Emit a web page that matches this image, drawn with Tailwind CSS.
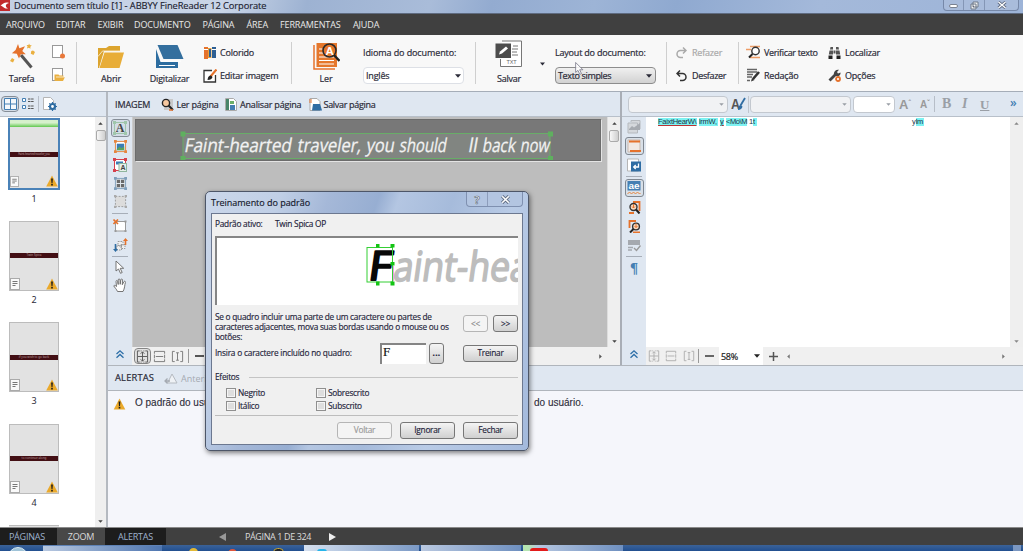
<!DOCTYPE html>
<html lang="pt-BR">
<head>
<meta charset="utf-8">
<title>Documento sem título [1] - ABBYY FineReader 12 Corporate</title>
<script src="https://cdn.jsdelivr.net/npm/@tailwindcss/browser@4"></script>
</head>
<body class="relative w-[1023px] h-[551px] overflow-hidden flex flex-col bg-[#f7f7f7] font-['Open_Sans','Noto_Sans',sans-serif] text-[9px] leading-none text-[#2b2b38] whitespace-nowrap">

<!-- shared symbols -->
<svg class="hidden">
  <symbol id="warn" viewBox="0 0 12 12"><path d="M6 .5 11.8 11.5H.2Z" fill="#eaa92b"/><path d="M5.1 3.5h1.8L6.5 8h-1ZM5.2 8.8h1.6v1.7H5.2Z" fill="#1b1b1b"/></symbol>
  <symbol id="note" viewBox="0 0 10 12"><rect x=".5" y=".5" width="9" height="11" fill="#fafafa" stroke="#aaa"/><path d="M2.5 3.5h5M2.5 5.5h5M2.5 7.5h3" stroke="#777"/></symbol>
  <symbol id="fit" viewBox="0 0 14 14"><path d="M4 1H1.500v12H4M10 1h2.500v12H10M7 2v10M2 7h10M5 4l2-2 2 2M5 10l2 2 2-2" fill="none" stroke="currentColor"/><path d="M5 1h1M8 1h1M5 13h1M8 13h1" stroke="currentColor"/></symbol>
  <symbol id="fitw" viewBox="0 0 14 14"><path d="M1.500 4V1.500h11V4M1.500 10v2.500h11V10M1.500 5v4M12.500 5v4M3 7h8" fill="none" stroke="currentColor"/></symbol>
  <symbol id="fith" viewBox="0 0 14 14"><path d="M4 1.500H1.500v11H4M10 1.500h2.500v11H10M7 3v8M5.500 3h3M5.500 11h3" fill="none" stroke="currentColor"/></symbol>
  <symbol id="chev" viewBox="0 0 10 10"><path d="M1.500 5 5 1.800 8.500 5M1.500 8.700 5 5.500l3.500 3.200" fill="none" stroke="#2d6fa8" stroke-width="1.300"/></symbol>
  <symbol id="dd" viewBox="0 0 6 4"><path d="M0 .3h6L3 3.800Z" fill="currentColor"/></symbol>
  <symbol id="frame" viewBox="0 0 14 14"><rect x="1.500" y="1.500" width="11" height="11" fill="none" stroke="currentColor"/><path d="M0 0h3v3H0ZM11 0h3v3h-3ZM0 11h3v3H0ZM11 11h3v3h-3Z" fill="currentColor"/></symbol>
</svg>

<!-- title bar -->
<header class="h-[14px] shrink-0 flex items-start border-b border-[#5f6b80] bg-[linear-gradient(105deg,#c3d0e4_0%,#c9d5e7_22%,#9db2d2_30%,#a9bcd9_42%,#93abd0_48%,#9db4d6_58%,#8fa9d0_66%,#a4b9da_80%,#9db4d8_100%)]">
  <svg class="w-[10px] h-[11px]" viewBox="0 0 10 11"><rect width="10" height="11" fill="#c22a2c"/><path d="M9 3C5 1.500 3 4 .5 5.500 3 6 4 9 8 8.500 5 7 5 4 9 3Z" fill="#fff"/></svg>
  <span class="ml-1 mt-px text-[9.300px] tracking-[-0.090px] text-[#1c2230] [-webkit-text-stroke:.15px]">Documento sem título [1] - ABBYY FineReader 12 Corporate</span>
  <div class="ml-auto mr-[4px] w-[76px] h-[11px] flex rounded-b border border-t-0 border-[#7688a8] bg-[#a9bcdb]">
    <span class="w-[20px] border-r border-[#8496b5] grid place-items-center"><i class="mt-0.5 w-[9px] h-[4px] rounded-sm border border-[#7a8291] bg-white"></i></span>
    <span class="w-[21px] border-r border-[#8496b5] grid place-items-center"><svg class="w-[9px] h-[9px]" viewBox="0 0 9 9"><path d="M3 1h5v5H3ZM1 3h5v5H1Z" fill="#f3f3f3" stroke="#6f7888"/><path d="M3 5h1v1H3Z" fill="#667"/></svg></span>
    <span class="flex-1 grid place-items-center"><svg class="w-[10px] h-[8px]" viewBox="0 0 10 8"><path d="m1.500 1 7 6M8.500 1l-7 6" stroke="#5e6a80" stroke-width="3"/><path d="m1.500 1 7 6M8.500 1l-7 6" stroke="#fff" stroke-width="1.300"/></svg></span>
  </div>
</header>

<!-- menu -->
<nav class="h-[21px] shrink-0 flex items-center pl-[6px] gap-[11.500px] bg-[#404040] text-[#e9e9e9] text-[9px] tracking-[-0.120px]">
  <span class="w-[38.500px]">ARQUIVO</span><span class="w-[30px]">EDITAR</span><span class="w-[25px]">EXIBIR</span><span class="w-[57px]">DOCUMENTO</span><span class="w-[32.500px]">PÁGINA</span><span class="w-[22px]">ÁREA</span><span class="w-[61.500px]">FERRAMENTAS</span><span>AJUDA</span>
</nav>

<!-- toolbar -->
<section class="h-[56px] shrink-0 flex items-center bg-[#f8f8f8] tracking-[-0.200px] [-webkit-text-stroke:.2px]">
  <div class="w-[77px] h-[42px] border-r border-[#cfcfcf] flex">
    <div class="w-[43px] flex flex-col items-center">
      <svg class="w-[26px] h-[27px] mt-px" viewBox="8 45 26 27"><path d="m20 57 10.500 12.500" stroke="#555" stroke-width="3"/><path d="m17 46 1.400 4.200 5.600-2-2.700 4.700 3.500 3.400-5-.1-1.800 4.300-2.200-4.700-4.900-.6 3.700-3.200Z" fill="#e5722c"/><path d="m28 45.500.8 1.600 2 .5-1.500 1.200.2 2-1.700-1-1.900.6.700-1.800-1-1.600h1.900ZM32 52.500l2 1.500-1.500 3-2.700-1.200.5-2.700ZM11 60l2.500 1.500-1.500 3-3-1.500Z" fill="#eab040"/></svg>
      <span class="mt-[4px]">Tarefa</span>
    </div>
    <div class="pl-[8px] pt-[3px] flex flex-col gap-[9px]">
      <svg class="w-[15px] h-[14px]" viewBox="0 0 15 14"><rect x="1.500" y=".5" width="10" height="12" fill="#fff" stroke="#999"/><circle cx="11.500" cy="11" r="2.500" fill="#e9783a"/></svg>
      <svg class="w-[15px] h-[14px]" viewBox="0 0 15 14"><rect x="1.500" y=".5" width="10" height="12" fill="#fff" stroke="#999"/><path d="M3.500 13V6.500h4l1 1h4V9h1.500l-2 4Z" fill="#eab040"/><path d="m5 9 9 0" stroke="#fff" stroke-width=".7"/></svg>
    </div>
  </div>
  <div class="w-[215px] h-[42px] border-r border-[#cfcfcf] flex">
    <div class="w-[68px] flex flex-col items-center">
      <svg class="w-[28px] h-[26px] mt-[2px]" viewBox="97 45 28 26"><path d="M98 69V49h8l3-2h11v5H104l-5 17Z" fill="#dca42e"/><path d="M104.500 53.500H124L119.500 69H99.500Z" fill="#e8ad38"/><path d="M98 57.500 102.500 52H121" fill="none" stroke="#fbf3df" stroke-width=".8"/></svg>
      <span class="mt-[4px]">Abrir</span>
    </div>
    <div class="w-[49px] flex flex-col items-center">
      <svg class="w-[28px] h-[26px] mt-[2px]" viewBox="156 45 28 26"><path d="M156 50v19h22v-6h-17.500Z" fill="#2d6da0"/><path d="M157.500 46h20L183.500 60h-20Z" fill="#346f9e"/><path d="M161 62h20M159 66.500h16" stroke="#fff" stroke-width="1"/></svg>
      <span class="mt-[4px]">Digitalizar</span>
    </div>
    <div class="pl-[9px] flex flex-col">
      <div class="h-[19px] shrink-0 mt-px flex items-center gap-[4px]"><svg class="w-[13px] h-[13px]" viewBox="0 0 13 13"><path d="M1 1h4v12H1Z" fill="#e5722c"/><path d="M5 2h3.500v10H5Z" fill="#e9a23a"/><path d="M9 1h4v11H9ZM6 3h2v8H6Z" fill="#2d5f93"/><path d="M1 3.500h4M9 3.500h4" stroke="#fff"/></svg><span>Colorido</span></div>
      <div class="h-[27px] shrink-0 flex items-center gap-[3px]"><svg class="w-[14px] h-[14px]" viewBox="0 0 14 14"><path d="M9 1.500H1v11.500h11.500V6" fill="#fff" stroke="#333" stroke-width="1.300"/><path d="m13.500.5-6 7" stroke="#e5722c" stroke-width="2.200"/><path d="M8 6.500c-2 0-3 1-3.500 4.500 3 0 4.500-1 5-3Z" fill="#222"/></svg><span>Editar imagem</span></div>
    </div>
  </div>
  <div class="w-[184px] h-[42px] border-r border-[#cfcfcf] flex">
    <div class="w-[68px] flex flex-col items-center">
      <svg class="w-[28px] h-[28px]" viewBox="311 43 28 28"><path d="M313 46v24h21" fill="none" stroke="#e5722c" stroke-width="1.500"/><path d="M315.500 44H336v24h-20.500Z" fill="#e5772c"/><path d="M318 50h6M318 54h6M318 58h15M318 61.500h15M318 65h15" stroke="#fff"/><circle cx="328.500" cy="51.500" r="6.500" fill="#e5772c" stroke="#2a2a2a" stroke-width="1.600"/><path d="m333 56 5.500 6" stroke="#222" stroke-width="2.400"/><text x="324.500" y="56" font-family="Liberation Sans" font-weight="bold" font-size="11.500" fill="#fff">A</text></svg>
      <span class="mt-[4px]">Ler</span>
    </div>
    <div class="pl-[3px] flex flex-col">
      <span class="h-[19px] mt-px flex items-center tracking-[-0.100px]">Idioma do documento:</span>
      <div class="mt-[5px] w-[101px] h-[17px] border border-[#dde0e6] rounded-sm bg-white flex items-center justify-between px-[2px]"><span>Inglês</span><svg class="w-[6px] h-[4px]"><use href="#dd"/></svg></div>
    </div>
  </div>
  <div class="w-[191px] h-[42px] border-r border-[#cfcfcf] flex">
    <div class="w-[64px] pl-[2px] flex flex-col items-center">
      <svg class="w-[28px] h-[28px] -mt-[2px]" viewBox="495 41 28 28"><path d="M502 42h19.500v25.500h-21V60" fill="#fff" stroke="#777"/><path d="M495.500 44.500H511V59h-15.500Z" fill="#4d4d4d"/><path d="m499 55.500 1-3 6-5 2 2-6 5Z" fill="#fff"/><path d="M513 47h5M512 50h6M512 53h5M512 56h6" stroke="#777"/><text x="506.500" y="65" font-family="Liberation Sans" font-size="5.500" fill="#666">TXT</text></svg>
      <span class="mt-[6px]">Salvar</span>
    </div>
    <svg class="w-[5px] h-[4px] mt-[20px]"><use href="#dd"/></svg>
    <div class="pl-[10px] flex flex-col">
      <span class="h-[19px] mt-px flex items-center">Layout do documento:</span>
      <div class="mt-[5px] w-[101px] h-[17px] border border-[#8d8d8d] rounded-sm bg-linear-to-b from-[#f0f0f0] to-[#d2d2d2] flex items-center justify-between px-[2px]"><span class="tracking-[-0.350px]">Texto simples</span><svg class="w-[6px] h-[4px] mr-px"><use href="#dd"/></svg></div>
    </div>
  </div>
  <div class="w-[72px] h-[42px] border-r border-[#cfcfcf] pl-[9px]">
    <div class="h-[19px] mt-px flex items-center gap-[5px] text-[#a9a9a9]"><svg class="w-[11px] h-[13px]" viewBox="0 0 11 13"><path d="M7 1.500 10 4.500 7 7.500M10 4.500H4.500a3 3 0 0 0 0 7H7" fill="none" stroke="#aaa" stroke-width="1.500"/></svg><span>Refazer</span></div>
    <div class="h-[27px] flex items-center gap-[5px] tracking-[-0.350px]"><svg class="w-[11px] h-[13px]" viewBox="0 0 11 13"><path d="M4 1.500 1 4.500l3 3M1 4.500h5.500a3 3 0 0 1 0 7H4" fill="none" stroke="#333" stroke-width="1.500"/></svg><span>Desfazer</span></div>
  </div>
  <div class="pl-[7px] h-[42px] grid grid-cols-[82px_auto] grid-rows-[20px_26px]">
    <div class="flex items-center gap-[3px]"><svg class="w-[15px] h-[14px]" viewBox="0 0 15 14"><path d="M4 1.500h10M0 4.500h5M4 12.500h10" stroke="#ee9d66" stroke-width="1.300"/><circle cx="9.500" cy="6" r="3.700" fill="#fff" stroke="#333" stroke-width="1.400"/><path d="M6.500 9 3 12.500" stroke="#222" stroke-width="2"/></svg><span class="tracking-[-0.330px]">Verificar texto</span></div>
    <div class="flex items-center gap-[4px]"><svg class="w-[13px] h-[13px]" viewBox="0 0 13 13"><path d="M2.500 1h2.500v2.500H2ZM8 1h2.500L11 3.500H8ZM1.500 4.500H5v4H.8ZM8 4.500h3.500l.7 4H8ZM5.500 4.500h2v3h-2Z" fill="#555"/><path d="M.5 9.500h4V13h-4ZM8.500 9.500h4V13h-4Z" fill="#222"/></svg><span>Localizar</span></div>
    <div class="flex items-center gap-[3px]"><svg class="w-[15px] h-[14px]" viewBox="0 0 15 14"><path d="M1 1.500h10M1 4h10M1 6.500h6M1 9h5M1 12.500h3" stroke="#666" stroke-width="1.300"/><path d="m13 4-6 7" stroke="#333" stroke-width="2.600"/><path d="M5 13.500 6 10l2.500 2Z" fill="#333"/></svg><span>Redação</span></div>
    <div class="flex items-center gap-[4px]"><svg class="w-[13px] h-[13px]" viewBox="0 0 13 13"><path d="m1.500 11.500 6-6" stroke="#444" stroke-width="2.800"/><path d="M11 .8 9 3l1 1.500 2.500-1C13 6 10.500 8 8 7L5.800 5C5.800 2.500 8 .2 11 .8Z" fill="#444"/><circle cx="10" cy="10" r="2" fill="#fff" stroke="#e5722c" stroke-width="1.800"/></svg><span>Opções</span></div>
  </div>
</section>

<!-- work area -->
<main class="h-[436px] shrink-0 flex border-t border-[#a5adb8]">
  <!-- pages -->
  <aside class="w-[108px] shrink-0 flex flex-col border-r-2 border-[#b4b9c0]">
    <div class="h-[24px] shrink-0 flex items-center bg-[#dfe7f1]">
      <span class="w-[18px] h-[16px] ml-px border-[1.500px] border-[#858d97] rounded-sm grid place-items-center bg-[#d5dde7]"><svg class="w-[13px] h-[12px]" viewBox="0 0 13 12"><path d="M.5.500h12v11H.5ZM6.500.500v11M.5 6h12" fill="#f4f8fc" stroke="#447fb3"/></svg></span>
      <svg class="w-[13px] h-[12px] ml-[3px]" viewBox="0 0 13 12"><path d="M.5.500h3v3h-3ZM.5 7.500h3v3h-3Z" fill="#fff" stroke="#447fb3"/><path d="M6 1h6M6 3.500h6M6 8h6M6 10.500h6" stroke="#555" stroke-dasharray="2.500 .6"/></svg>
      <i class="w-px h-[16px] bg-[#b7bec8] ml-[3px]"></i>
      <svg class="w-[14px] h-[14px] ml-[4px]" viewBox="0 0 14 14"><path d="M.5.500h7l3 3v9H.5Z" fill="#fff" stroke="#b5b5b5"/><circle cx="9.500" cy="9.500" r="2.500" fill="#fff" stroke="#2f6da3" stroke-width="2.200"/><path d="M9.500 5v2M9.500 12v2M5 9.500h2M12 9.500h2M6.300 6.300l1.400 1.400M11.300 11.300l1.400 1.400M12.700 6.300l-1.400 1.400M7.700 11.300l-1.400 1.400" stroke="#2f6da3" stroke-width="1.200"/></svg>
    </div>
    <div class="flex-1 min-h-0 flex border-t border-[#b8c0ca]">
      <div class="w-[95px] bg-white flex flex-col overflow-hidden pl-[8px] pt-[1px] font-['Noto_Sans',sans-serif] text-[9px]">
        <div class="h-[101.600px] shrink-0 w-[52px] flex flex-col">
          <div class="h-[71.500px] border-2 border-[#4a82b8] bg-[#e2e2e2] flex flex-col">
            <div class="h-[7px] bg-linear-to-b from-[#d6f0cc] from-40% to-[#5fc84c]"></div>
            <div class="mt-[25px] h-[5px] shrink-0 bg-[#430f14] text-[#b79a9c] text-[3px] tracking-[-0.200px] leading-[5px] text-center overflow-hidden">Faint-hearted traveler, you</div>
            <div class="flex-1 flex items-end justify-between pb-px"><svg class="w-[9px] h-[11px]"><use href="#note"/></svg><svg class="w-[12px] h-[12px]"><use href="#warn"/></svg></div>
          </div><span class="mt-[4px] text-center">1</span>
        </div>
        <div class="h-[101.600px] shrink-0 w-[52px] flex flex-col px-px pt-px">
          <div class="h-[70px] border border-[#bcbcbc] bg-[#e2e2e2] flex flex-col">
            <div class="mt-[31.500px] h-[5px] shrink-0 bg-[#430f14] text-[#b79a9c] text-[3px] leading-[5px] text-center">Twin Spica</div>
            <div class="flex-1 flex items-end justify-between"><svg class="w-[10px] h-[12px]"><use href="#note"/></svg><svg class="w-[12px] h-[12px]"><use href="#warn"/></svg></div>
          </div><span class="mt-[4px] text-center">2</span>
        </div>
        <div class="h-[101.600px] shrink-0 w-[52px] flex flex-col px-px pt-px">
          <div class="h-[70px] border border-[#bcbcbc] bg-[#e2e2e2] flex flex-col">
            <div class="mt-[31.500px] h-[5px] shrink-0 bg-[#430f14] text-[#b79a9c] text-[3px] leading-[5px] text-center">if you wish to go back</div>
            <div class="flex-1 flex items-end justify-between"><svg class="w-[10px] h-[12px]"><use href="#note"/></svg><svg class="w-[12px] h-[12px]"><use href="#warn"/></svg></div>
          </div><span class="mt-[4px] text-center">3</span>
        </div>
        <div class="h-[101.600px] shrink-0 w-[52px] flex flex-col px-px pt-px">
          <div class="h-[70px] border border-[#bcbcbc] bg-[#e2e2e2] flex flex-col">
            <div class="mt-[31.500px] h-[5px] shrink-0 bg-[#430f14] text-[#b79a9c] text-[3px] leading-[5px] text-center">to continue along</div>
            <div class="flex-1 flex items-end justify-between"><svg class="w-[10px] h-[12px]"><use href="#note"/></svg><svg class="w-[12px] h-[12px]"><use href="#warn"/></svg></div>
          </div><span class="mt-[4px] text-center">4</span>
        </div>
        <div class="w-[50px] ml-px mt-px h-2 shrink-0 border-t border-[#bcbcbc] bg-[#e2e2e2]"></div>
      </div>
      <div class="flex-1 bg-[#efefef] flex flex-col items-center pt-[5px] pb-[4px]">
        <svg class="w-[5px] h-[3px] rotate-180 text-[#444]"><use href="#dd"/></svg>
        <i class="mt-[5px] w-[10px] h-[11px] border border-[#aaa] rounded-[2px] bg-linear-to-r from-[#f8f8f8] to-[#cfcfcf]"></i>
        <svg class="mt-auto w-[5px] h-[3px] text-[#444]"><use href="#dd"/></svg>
      </div>
    </div>
  </aside>

  <div class="flex-1 min-w-0 flex flex-col">
    <div class="h-[274px] shrink-0 flex border-b border-[#b0b5bc]">
      <!-- image panel -->
      <section class="w-[514px] shrink-0 flex flex-col border-r-2 border-[#a9aeb6]">
        <div class="h-[24px] shrink-0 flex items-center pl-[7px] bg-[#dfe7f1] tracking-[-0.190px] [-webkit-text-stroke:.2px]">
          <span class="w-[46px] text-[9px] tracking-[-0.100px]">IMAGEM</span>
          <svg class="w-[13px] h-[13px]" viewBox="0 0 13 13"><path d="M3 1h9v11H3Z" fill="#c9c9c9"/><circle cx="5" cy="5" r="3.600" fill="#f6c79e" stroke="#222" stroke-width="1.400"/><path d="m7.500 7.500 4.500 4.500" stroke="#222" stroke-width="2"/><path d="M8 12h4" stroke="#e5722c" stroke-width="1.500"/></svg>
          <span class="ml-[2.500px] w-[48px]">Ler página</span>
          <svg class="w-[12px] h-[13px]" viewBox="0 0 12 13"><path d="M.5.500h8l3 3v9H.5Z" fill="#fff" stroke="#aaa"/><path d="M1 1h3v11H1Z" fill="#49856a"/><path d="M5 3h4v3H5Z" fill="#6cb06a"/><path d="M5 7h5v5H5Z" fill="#447fb3"/></svg>
          <span class="ml-[3.500px] w-[68.500px]">Analisar página</span>
          <svg class="w-[13px] h-[13px]" viewBox="0 0 13 13"><path d="M1 .5h7l3 3v9H1Z" fill="#fff" stroke="#aaa"/><path d="M0 2h3M0 4h3" stroke="#e5722c"/><path d="M4 6h7l2 6.500H3Z" fill="#2f6da3"/></svg>
          <span class="ml-[2px] tracking-[-0.300px]">Salvar página</span>
        </div>
        <div class="flex-1 min-h-0 flex border-t border-[#b8c0ca]">
          <div class="w-[24px] shrink-0 flex flex-col items-center pt-[1.500px] bg-[#dfe7f1]">
            <span class="w-[19px] h-[18.500px] shrink-0 border-[1.500px] border-[#858d97] rounded-[3px] bg-[#d3dce6] grid place-items-center"><svg class="w-[14px] h-[14px] text-[#9fc6ab]" viewBox="0 0 14 14"><use href="#frame"/><text x="2.700" y="11.300" font-family="Liberation Serif" font-weight="bold" font-size="12" fill="#444">A</text></svg></span>
            <span class="h-[18.500px] shrink-0 grid place-items-center"><svg class="w-[13px] h-[13px] text-[#e5853f]" viewBox="0 0 14 14"><path d="M2 2h10v10H2Z" fill="#fff"/><use href="#frame"/><path d="M3 4h8v7H3Z" fill="#3b7db5"/><path d="m3 10 3-3 2 2 3-2v4H3Z" fill="#5aa35c"/></svg></span>
            <span class="h-[18.500px] shrink-0 grid place-items-center"><svg class="w-[14px] h-[14px] text-[#d6404c]" viewBox="0 0 14 14"><path d="M2 2h10v10H2Z" fill="#fff"/><use href="#frame"/><path d="M3 3.500h7v3H3Z" fill="#3b7db5"/><rect x="6" y="5.500" width="7.500" height="8" fill="#e6f0ea" stroke="#8fb59e"/><text x="7.400" y="12.200" font-family="Liberation Sans" font-weight="bold" font-size="7" fill="#444">A</text></svg></span>
            <span class="h-[18.500px] shrink-0 grid place-items-center"><svg class="w-[13px] h-[13px] text-[#7f9fbb]" viewBox="0 0 14 14"><path d="M2 2h10v10H2Z" fill="#dfe6ec"/><use href="#frame"/><path d="M3 3h3.500v3.500H3ZM7.500 3H11v3.500H7.500ZM3 7.500h3.500V11H3ZM7.500 7.500H11V11H7.500Z" fill="#6a6a6a"/></svg></span>
            <span class="h-[18.500px] shrink-0 grid place-items-center"><svg class="w-[13px] h-[13px]" viewBox="0 0 14 14"><rect x="1.500" y="1.500" width="11" height="11" fill="#dcdcdc" stroke="#999" stroke-dasharray="2 1.500"/><path d="M0 0h2.500v2.500H0ZM11.500 0H14v2.500h-2.500ZM0 11.500h2.500V14H0ZM11.500 11.500H14V14h-2.500Z" fill="#aaa"/></svg></span>
            <i class="w-[16px] h-px my-[1.750px] shrink-0 bg-[#a7aeb8]"></i>
            <span class="h-[20px] shrink-0 grid place-items-center"><svg class="w-[14px] h-[13px]" viewBox="0 0 14 13"><rect x="2.500" y="2.500" width="10" height="9.500" fill="#fff" stroke="#999"/><path d="M11.500 1.500h2v2h-2ZM11.500 11h2v2h-2ZM1.500 11h2v2h-2Z" fill="#999"/><path d="m.5.500 4.500 4.500M5 .5.500 5" stroke="#e5722c" stroke-width="1.600"/></svg></span>
            <span class="h-[18.500px] shrink-0 grid place-items-center"><svg class="w-[15px] h-[14px]" viewBox="0 0 15 14"><path d="M5 3.500h5v4H5ZM3.500 8h5v4h-5ZM8 6.500h4v4H8Z" fill="#eee" stroke="#999" stroke-dasharray="1.500 1"/><path d="M12.500 0 15 3h-1.700v4h-1.600V3H10Z" fill="#e5722c"/><path d="M2.500 14 0 11h1.700V6h1.600v5H5Z" fill="#2f6da3"/></svg></span>
            <i class="w-[16px] h-px my-[1.500px] shrink-0 bg-[#a7aeb8]"></i>
            <span class="h-[18.500px] shrink-0 grid place-items-center"><svg class="w-[10px] h-[14px]" viewBox="0 0 10 14"><path d="M1 1v10l2.500-2 2 4.300 1.700-.8-2-4.200H8.700Z" fill="#fff" stroke="#666" stroke-width=".9"/></svg></span>
            <span class="h-[18.500px] shrink-0 grid place-items-center"><svg class="w-[15px] h-[15px]" viewBox="0 0 15 15"><path d="M4.500 13.500C3.500 11 1.500 9.500.8 7.800c.7-.8 1.700-.4 2.700.7L3 3.500c0-1.300 1.500-1.300 1.700 0l.5 3V2c0-1.400 1.700-1.400 1.800 0l.2 4.300.6-4.500c.3-1.200 1.800-1 1.700.3L9.300 6.700l1.600-3c.6-1 1.900-.4 1.500.8-.8 2.500-.6 6-2.400 9Z" fill="#fff" stroke="#666" stroke-width=".9"/></svg></span>
            <svg class="mt-auto mb-[6px] w-[10px] h-[10px] shrink-0"><use href="#chev"/></svg>
          </div>
          <div class="flex-1 min-w-0 flex flex-col">
            <div class="h-[230px] flex">
              <div class="w-[475px] bg-[#bdbdbd] pt-[2px] pl-[2px] border-l border-[#ccc]">
                <div class="w-[466px] h-[42px] bg-[#787878] border border-[#6c6c6c] shadow-[1px_1px_0_#e4e4e4]">
                  <svg class="block w-[464px] h-[40px]" viewBox="136 119 464 40"><rect x="183" y="132.500" width="367" height="25" fill="#818581" stroke="#68ad68"/><g transform="translate(26.500 0) skewX(-10)" font-family="'Open Sans',sans-serif" font-size="19" fill="#f2f2f2" stroke="#f2f2f2" stroke-width=".3"><text x="184" y="151" textLength="107" lengthAdjust="spacingAndGlyphs">Faint-hearted</text><text x="297" y="151" textLength="64" lengthAdjust="spacingAndGlyphs">traveler,</text><text x="366" y="151" textLength="28" lengthAdjust="spacingAndGlyphs">you</text><text x="399" y="151" textLength="47" lengthAdjust="spacingAndGlyphs">should</text><text x="468" y="151" textLength="9" lengthAdjust="spacingAndGlyphs">ll</text><text x="482" y="151" textLength="33" lengthAdjust="spacingAndGlyphs">back</text><text x="520" y="151" textLength="29" lengthAdjust="spacingAndGlyphs">now</text></g><path d="M180.500 130.500h5v5h-5ZM180.500 155h5v5h-5ZM548 130.500h5v5h-5ZM548 155h5v5h-5Z" fill="#5fb05f"/></svg>
                </div>
              </div>
              <div class="flex-1 border-l border-[#ddd] bg-[#efefef] flex flex-col items-center pt-[5px] pb-[4px]">
                <svg class="w-[5px] h-[3px] rotate-180 text-[#444]"><use href="#dd"/></svg>
                <i class="mt-[5px] w-[10px] h-[12px] border border-[#aaa] rounded-[2px] bg-linear-to-r from-[#f8f8f8] to-[#cfcfcf]"></i>
                <svg class="mt-auto w-[5px] h-[3px] text-[#444]"><use href="#dd"/></svg>
              </div>
            </div>
            <div class="flex-1 flex items-center bg-[#f0f0f0] text-[#777]">
              <span class="ml-[2px] w-[17px] h-[16px] border-[1.500px] border-[#858585] rounded-sm grid place-items-center bg-[#e2e2e2] text-[#555]"><svg class="w-[13px] h-[13px]"><use href="#fit"/></svg></span>
              <svg class="w-[13px] h-[13px] ml-[2px]"><use href="#fitw"/></svg>
              <svg class="w-[13px] h-[13px] ml-[5px]"><use href="#fith"/></svg>
              <i class="ml-[4px] w-px h-[14px] bg-[#999]"></i><i class="ml-[6px] w-[9px] h-[1.500px] bg-[#555]"></i>
              <svg class="ml-auto mr-[17px] w-[5px] h-[3px] -rotate-90 text-[#555]"><use href="#dd"/></svg>
            </div>
          </div>
        </div>
      </section>

      <!-- text panel -->
      <section class="flex-1 min-w-0 flex flex-col">
        <div class="h-[24px] shrink-0 flex items-center pl-[6px] bg-[#dfe7f1] text-[#9a9fa6]">
          <div class="w-[100px] h-[17px] rounded-sm border border-[#c3c8cf] bg-[#f1f2f4] flex items-center justify-end pr-[3px]"><svg class="w-[5px] h-[3px]"><use href="#dd"/></svg></div>
          <svg class="ml-[3px] w-[15px] h-[14px]" viewBox="0 0 15 14"><text x="0" y="12" font-family="Liberation Sans" font-weight="bold" font-size="14" textLength="9" lengthAdjust="spacingAndGlyphs" fill="#555">A</text><path d="m14 1-4.500 7.500" stroke="#2f6da3" stroke-width="1.800"/><path d="M7 13c0-3 1-4.500 2.500-5l2 1.500C11 11.500 9.500 13 7 13Z" fill="#2f6da3"/></svg>
          <i class="mx-[1.500px] w-px h-[17px] bg-[#c0c6ce]"></i>
          <div class="w-[101px] h-[17px] rounded-sm border border-[#c3c8cf] bg-[#f1f2f4] flex items-center justify-end pr-[3px]"><svg class="w-[5px] h-[3px]"><use href="#dd"/></svg></div>
          <div class="ml-[2px] w-[42px] h-[17px] rounded-sm border border-[#c3c8cf] bg-white flex items-center justify-end pr-[3px]"><svg class="w-[5px] h-[3px]"><use href="#dd"/></svg></div>
          <span class="ml-[4px] w-[21px] font-['Liberation_Sans',sans-serif] font-bold text-[13px] text-[#999]">A<sup class="text-[7px] -top-1">ˆ</sup></span>
          <span class="w-[14px] font-['Liberation_Sans',sans-serif] font-bold text-[10px] pt-[2px] text-[#999]">A<sup class="text-[7px]">ˇ</sup></span>
          <i class="w-px h-[16px] bg-[#b7bec8]"></i>
          <span class="ml-[7px] w-[20px] font-['Liberation_Serif',serif] font-bold text-[14px]">B</span>
          <span class="w-[18px] font-['Liberation_Serif',serif] font-bold italic text-[14px]">I</span>
          <span class="w-[30px] font-['Liberation_Serif',serif] font-bold text-[13px] underline">U</span>
          <span class="text-[12px] font-semibold text-[#447fb3] -mt-[2px]">»</span>
        </div>
        <div class="flex-1 min-h-0 flex border-t border-[#b8c0ca]">
          <div class="w-[24px] shrink-0 flex flex-col items-center pt-[.500px] bg-[#dfe7f1]">
            <span class="h-[19px] shrink-0 grid place-items-center"><svg class="w-[14px] h-[14px]" viewBox="0 0 14 14"><path d="M4 2V.5h9V9h-2M1 3h9.500v10H1Z" fill="#d5d8dc" stroke="#b5b9be"/><path d="m2 9 3-3 2 1.500L13 3v7H2Z" fill="#a6aab0"/></svg></span>
            <span class="w-[19px] h-[18px] my-[.5px] shrink-0 border-[1.500px] border-[#7f8791] rounded-[3px] bg-[#d9e0e8] grid place-items-center"><svg class="w-[14px] h-[14px]" viewBox="0 0 14 14"><path d="M1 1h12v12H1Z" fill="#f2e9e4" stroke="#c8b9b0"/><path d="M2 2.500h11M3 12h11" stroke="#e5722c" stroke-width="1.800"/></svg></span>
            <span class="h-[19px] shrink-0 grid place-items-center"><svg class="w-[14px] h-[14px]" viewBox="0 0 14 14"><path d="M.5 1h11v12H.5Z" fill="#fff" stroke="#b5b5b5"/><rect x="4" y="3.500" width="10" height="10" fill="#2f6da3"/><path d="M11.500 5.500V9H7M8.700 7 6.700 9l2 2" fill="none" stroke="#fff" stroke-width="1.300"/></svg></span>
            <i class="w-[16px] h-px my-[1.500px] shrink-0 bg-[#a7aeb8]"></i>
            <span class="w-[19px] h-[18px] my-[.5px] shrink-0 border-[1.500px] border-[#7f8791] rounded-[3px] bg-[#d9e0e8] grid place-items-center"><svg class="w-[14px] h-[14px]" viewBox="0 0 14 14"><rect x=".5" width="13" height="9.500" fill="#447fb3"/><text x="1.500" y="8" font-family="Liberation Sans" font-weight="bold" font-size="9" textLength="11" lengthAdjust="spacingAndGlyphs" fill="#fff">ae</text><path d="m.5 13 2-2 2 2 2-2 2 2 2-2 2 2 1-1" fill="none" stroke="#e5853f"/></svg></span>
            <span class="h-[19px] shrink-0 grid place-items-center"><svg class="w-[13px] h-[13px]" viewBox="0 0 13 13"><path d="M5 1h6.500v9M1 12h5" fill="none" stroke="#e5722c" stroke-width="1.800"/><circle cx="5.500" cy="6" r="3.500" fill="#f9d9bd" stroke="#333" stroke-width="1.400"/><path d="m8 8.500 3.500 4" stroke="#222" stroke-width="2"/><path d="M5.500 3v4M4 5.500 5.500 7 7 5.500" stroke="#e5722c" fill="none"/></svg></span>
            <span class="h-[19px] shrink-0 grid place-items-center"><svg class="w-[13px] h-[13px]" viewBox="0 0 13 13"><path d="M1.500 8V1H8M5 12.500h7" fill="none" stroke="#e5722c" stroke-width="1.800"/><circle cx="8" cy="6.500" r="3.400" fill="#f9d9bd" stroke="#333" stroke-width="1.400"/><path d="M5.500 9 2 12.500" stroke="#222" stroke-width="2"/><path d="M8 3.500v4M6.500 6 8 7.500 9.500 6" stroke="#e5722c" fill="none"/></svg></span>
            <span class="h-[19px] shrink-0 grid place-items-center"><svg class="w-[14px] h-[13px]" viewBox="0 0 14 13"><path d="M1 1h12v5H1Z" fill="#a5a9af"/><path d="M1 8.500h5M1 11h4" stroke="#a5a9af" stroke-width="1.500"/><path d="m7 9 2.500 2.500 4-5" fill="none" stroke="#999" stroke-width="1.400"/></svg></span>
            <i class="w-[16px] h-px my-[1.500px] shrink-0 bg-[#a7aeb8]"></i>
            <span class="h-[19px] shrink-0 grid place-items-center"><span class="font-['Liberation_Serif',serif] font-bold text-[15px] text-[#447fb3]">¶</span></span>
            <svg class="mt-auto mb-[6px] w-[10px] h-[10px] shrink-0"><use href="#chev"/></svg>
          </div>
          <div class="flex-1 min-w-0 flex flex-col">
            <div class="h-[230px] flex">
              <div class="w-[364px] bg-white pl-[12px] pt-px flex items-start font-['Liberation_Sans',sans-serif] text-[7.500px] leading-[8px] text-[#234]">
                <span class="w-[39px] bg-[#7df2f2] underline decoration-[#b33] tracking-[-0.300px]">FaixtHearW\</span>
                <span class="ml-[2px] w-[19px] bg-[#7df2f2] tracking-[-0.300px]">lrmW,</span>
                <span class="ml-[2px] w-[4px] bg-[#7df2f2] underline decoration-[#b33]">y</span>
                <span class="ml-[2px] w-[21px] bg-[#7df2f2] tracking-[-0.400px]">&lt;Mo\M</span>
                <span class="ml-[2px] w-[4px]">1</span>
                <span class="w-[4px] bg-[#7df2f2]">t</span>
                <span class="ml-[155px]">y</span><span class="w-[8px] bg-[#7df2f2] tracking-[-0.400px]">lm</span>
              </div>
              <div class="flex-1 bg-[#efefef] flex flex-col items-center pt-[5px] pb-[4px]">
                <svg class="w-[5px] h-[3px] rotate-180 text-[#888]"><use href="#dd"/></svg>
                <svg class="mt-auto w-[5px] h-[3px] text-[#888]"><use href="#dd"/></svg>
              </div>
            </div>
            <div class="flex-1 flex items-center bg-[#f0f0f0] text-[#aaa]">
              <svg class="w-[12px] h-[12px] ml-[2px]"><use href="#fit"/></svg>
              <svg class="w-[12px] h-[12px] ml-[5px]"><use href="#fitw"/></svg>
              <svg class="w-[12px] h-[12px] ml-[6px]"><use href="#fith"/></svg>
              <i class="ml-[3px] w-px h-[14px] bg-[#999]"></i><i class="ml-[6px] w-[9px] h-[1.500px] bg-[#666]"></i>
              <div class="ml-[5px] w-[44px] h-full bg-white flex items-center justify-between pl-[2px] pr-[3px] text-[#222] tracking-[-0.300px] [-webkit-text-stroke:.2px]"><span>58%</span><svg class="w-[6px] h-[4px]"><use href="#dd"/></svg></div>
              <svg class="ml-[6px] w-[9px] h-[9px]" viewBox="0 0 9 9"><path d="M0 4.500h9M4.500 0v9" stroke="#555" stroke-width="1.500"/></svg>
              <svg class="ml-[8px] w-[5px] h-[3px] rotate-90 text-[#777]"><use href="#dd"/></svg>
              <svg class="ml-auto mr-[17px] w-[5px] h-[3px] -rotate-90 text-[#777]"><use href="#dd"/></svg>
            </div>
          </div>
        </div>
      </section>
    </div>

    <!-- alerts -->
    <section class="flex-1 flex flex-col">
      <div class="h-[25px] shrink-0 flex items-center pl-[7px] bg-[#dfe7f1] border-b border-[#b0b5bc]">
        <span class="w-[49px] text-[9.300px] tracking-[0.200px] [-webkit-text-stroke:.2px]">ALERTAS</span>
        <svg class="w-[14px] h-[11px]" viewBox="0 0 14 11"><path d="m8 1 5 9H3.500Z" fill="#eef1f5" stroke="#b5bac1"/><path d="M6 8H1M3.500 5.500 1 8l2.500 2.500" fill="none" stroke="#a5aab1" stroke-width="1.300"/></svg>
        <span class="ml-[3px] text-[#a5aab1]">Anterior</span>
      </div>
      <div class="flex-1 bg-[#f5f6fb] flex items-start pt-[6px] pl-[5px] font-['Liberation_Sans',sans-serif] text-[10px] leading-[13px] [-webkit-text-stroke:.1px]">
        <svg class="w-[13px] h-[12px] mt-px mr-[9px]"><use href="#warn"/></svg>
        <span class="w-[391px] -mt-px">O padrão do usuário</span><span class="ml-[8px] -mt-px">do usuário.</span>
      </div>
    </section>
  </div>
</main>

<!-- status bar -->
<footer class="h-[18px] shrink-0 flex items-stretch bg-[#404040] border-t border-[#8a8a8a] text-[#dcdcdc] tracking-[-0.200px]">
  <span class="w-[57px] bg-[#1d1d1d] text-[#9fb3cd] grid place-items-center pr-[3px]">PÁGINAS</span>
  <span class="w-[48px] bg-[#484848] grid place-items-center">ZOOM</span>
  <span class="w-[61px] bg-[#1d1d1d] text-[#9fb3cd] grid place-items-center">ALERTAS</span>
  <div class="flex items-center pl-[53px]">
    <svg class="w-[7px] h-[8px]" viewBox="0 0 7 8"><path d="M7 0v8L0 4Z" fill="#999"/></svg>
    <span class="ml-[19px] w-[84px] tracking-[-0.380px]">PÁGINA 1 DE 324</span>
    <svg class="w-[7px] h-[8px]" viewBox="0 0 7 8"><path d="M0 0v8l7-4Z" fill="#eee"/></svg>
  </div>
</footer>

<!-- taskbar -->
<div class="h-[6px] shrink-0 flex bg-linear-to-b from-[#3b6298] to-[#214f90] overflow-hidden">
  <i class="ml-[8px] mt-[2px] w-[20px] h-[20px] rounded-full bg-[#9fc3d8] border border-[#d8e8f0]"></i>
  <i class="ml-[15px] w-[119px] bg-linear-to-r from-[#b8c8e0] to-[#4f76b0] border-t border-[#5f83b7]"></i>
  <i class="ml-[27px] mt-[3px] w-[9px] h-[9px] rounded-full bg-[#e2b936]"></i>
  <i class="ml-[30px] mt-[4px] w-[9px] h-[9px] rounded-full bg-[#e0553c]"></i>
  <i class="ml-[36px] mt-[3px] w-[11px] h-[9px] rounded-full bg-[#20242b] border border-[#c8a838]"></i>
  <span class="ml-[20px] w-[115px] pl-[13px] pt-[4px] bg-linear-to-r from-[#d5e0ef] to-[#7c9ac6]"><i class="block w-[10px] h-[6px] rounded-full bg-[#27b5ea]"></i></span>
  <i class="ml-[2px] w-[100px] bg-linear-to-r from-[#b9c8e0] to-[#6f90c0]"></i>
  <span class="ml-[2px] w-[100px] pl-[7px] pt-[3px] bg-linear-to-r from-[#b6e5b0] from-5% via-[#b5c6e0] via-15% to-[#6f90c0]"><i class="block w-[18px] h-[6px] rounded-sm bg-[#e31b1b]"></i></span>
  <i class="ml-auto mr-[2px] w-[8px] bg-[#7b97c1]"></i>
</div>

<!-- training dialog -->
<div class="absolute left-[205px] top-[191px] w-[324px] h-[260px] rounded-[5px] border border-[#4d5668] p-[5px] pt-0 shadow-[1px_2px_5px_rgba(0,0,0,.5)] bg-[linear-gradient(110deg,#cbd7ea_0%,#c0cfe6_18%,#a5b8d8_30%,#97aed2_42%,#b4c6e2_47%,#a6bbdb_60%,#b9cbe6_75%,#a3b9dc_100%)] flex flex-col text-[8.300px] tracking-[-0.250px] text-[#23233a] [-webkit-text-stroke:.15px]">
  <div class="h-[21px] shrink-0 flex items-start">
    <span class="pt-[6px] text-[9px] tracking-[-0.030px] text-[#15182a]">Treinamento do padrão</span>
    <div class="ml-auto w-[57px] h-[15px] flex border border-t-0 border-[#7f90b0] rounded-b bg-[#b3c5e1]">
      <span class="w-[21px] border-r border-[#8d9dbb] grid place-items-center font-bold text-[11px] text-white [-webkit-text-stroke:.6px_#555e70]">?</span>
      <span class="flex-1 grid place-items-center"><svg class="w-[11px] h-[9px]" viewBox="0 0 10 8"><path d="m2 1 6 6M8 1 2 7" stroke="#5e6a80" stroke-width="3"/><path d="m2 1 6 6M8 1 2 7" stroke="#fff" stroke-width="1.400"/></svg></span>
    </div>
  </div>
  <div class="flex-1 border border-[#6c7890] bg-[#f0f0f0] pl-[3px] pr-[4px] flex flex-col">
    <div class="h-[22px] shrink-0 flex items-center pb-px"><span class="w-[60px]">Padrão ativo:</span><span>Twin Spica OP</span></div>
    <svg class="h-[69px] w-[303px] shrink-0 border-t-2 border-l-2 border-[#858585] bg-white" viewBox="217 237 301 67">
      <g transform="translate(39.500 0) skewX(-8)" font-family="'Open Sans',sans-serif" stroke-linejoin="round" letter-spacing="0">
        <text x="392" y="280" font-size="41" fill="#bdbdbd" stroke="#bdbdbd" stroke-width="1.600" textLength="136" lengthAdjust="spacingAndGlyphs">aint-hea</text>
        <text x="367" y="279" font-size="40" fill="#080808" stroke="#080808" stroke-width="2.200" textLength="23" lengthAdjust="spacingAndGlyphs">F</text>
      </g>
      <rect x="367" y="246.500" width="25.500" height="34.500" fill="none" stroke="#35cf35"/>
      <path d="M376 243h3.500v3.500H376ZM390.500 243h4v3.500h-4ZM390.500 261h4v3.500h-4ZM390.500 280.500h4v4h-4ZM376 280.500h3.500v4H376Z" fill="#14c414"/><path d="M393.500 265v15" stroke="#e6a3e6"/>
    </svg>
    <div class="mt-[7px] h-[31px] shrink-0 flex leading-[9.800px]">
      <div class="w-[248px]">Se o quadro incluir uma parte de um caractere ou partes de<br>caracteres adjacentes, mova suas bordas usando o mouse ou os<br>botões:</div>
      <span class="mt-[3px] w-[25px] h-[17px] rounded-[3px] border border-[#b5b5b5] bg-[#f4f4f4] text-[#8a8a8a] grid place-items-center">&lt;&lt;</span>
      <span class="ml-[5px] mt-[3px] w-[25px] h-[17px] rounded-[3px] border border-[#777] bg-linear-to-b from-[#f4f4f4] to-[#d0d0d0] grid place-items-center">&gt;&gt;</span>
    </div>
    <div class="h-[21px] shrink-0 flex items-center">
      <span class="w-[165px] tracking-[-0.200px]">Insira o caractere incluído no quadro:</span>
      <span class="w-[46px] h-[21px] border-t-2 border-l-2 border-[#858585] bg-white pl-px font-['Liberation_Serif',serif] text-[13px] text-[#111]">F</span>
      <span class="ml-[3px] w-[15px] h-[21px] rounded-[3px] border border-[#777] bg-linear-to-b from-[#f4f4f4] to-[#d0d0d0] grid place-items-center font-bold tracking-[0.300px]">...</span>
      <span class="ml-[19px] w-[55px] h-[17px] rounded-[3px] border border-[#777] bg-linear-to-b from-[#f4f4f4] to-[#d0d0d0] grid place-items-center">Treinar</span>
    </div>
    <div class="mt-[8px] h-[10px] shrink-0 flex items-center gap-[10px]">Efeitos<i class="flex-1 h-px bg-[#c4c4c4]"></i></div>
    <div class="mt-[4px] ml-[11px] h-[27px] shrink-0 grid grid-cols-[90px_auto]">
      <span class="flex items-center gap-[2px]"><i class="w-[10px] h-[10px] border border-[#8f8f8f] bg-[#dedede] shadow-[inset_0_0_0_1px_#f5f5f5]"></i>Negrito</span>
      <span class="flex items-center gap-[2px]"><i class="w-[10px] h-[10px] border border-[#8f8f8f] bg-[#dedede] shadow-[inset_0_0_0_1px_#f5f5f5]"></i>Sobrescrito</span>
      <span class="flex items-center gap-[2px]"><i class="w-[10px] h-[10px] border border-[#8f8f8f] bg-[#dedede] shadow-[inset_0_0_0_1px_#f5f5f5]"></i>Itálico</span>
      <span class="flex items-center gap-[2px]"><i class="w-[10px] h-[10px] border border-[#8f8f8f] bg-[#dedede] shadow-[inset_0_0_0_1px_#f5f5f5]"></i>Subscrito</span>
    </div>
    <i class="mt-[2px] h-px shrink-0 bg-[#bdbdbd]"></i>
    <div class="mt-[6px] flex justify-end gap-[8px]">
      <span class="w-[55px] h-[17px] rounded-[3px] border border-[#b5b5b5] bg-[#f4f4f4] text-[#999] grid place-items-center">Voltar</span>
      <span class="w-[55px] h-[17px] rounded-[3px] border border-[#777] bg-linear-to-b from-[#f4f4f4] to-[#d0d0d0] grid place-items-center">Ignorar</span>
      <span class="w-[55px] h-[17px] rounded-[3px] border border-[#777] bg-linear-to-b from-[#f4f4f4] to-[#d0d0d0] grid place-items-center">Fechar</span>
    </div>
  </div>
</div>

<!-- mouse pointer -->
<svg class="absolute left-[575px] top-[61px] w-[9px] h-[15px]" viewBox="0 0 10 15"><path d="M.7.800v11l2.600-2.200 2 4.400 1.900-.8-2-4.300h3.600Z" fill="#fff" fill-opacity=".85" stroke="#778" stroke-width=".9"/></svg>
</body>
</html>
